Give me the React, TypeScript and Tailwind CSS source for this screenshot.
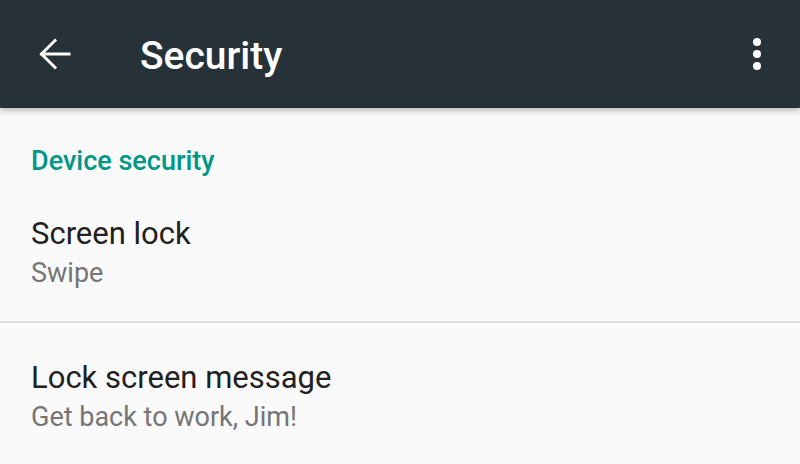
const ArrowBack = () => (
    <svg width="32" height="32" viewBox="0 0 32 32" fill="none" stroke="white" strokeWidth="3" strokeLinecap="square">
        <path d="M30 16H3" />
        <path d="M16 2.5L2.5 16L16 29.5" />
    </svg>
);

const MoreVert = () => (
    <svg width="10" height="34" viewBox="0 0 10 34" fill="white">
        <circle cx="5" cy="5" r="4" />
        <circle cx="5" cy="17" r="4" />
        <circle cx="5" cy="29" r="4" />
    </svg>
);

interface ItemProps {
    title:    string;
    summary:  string;
}

const PrefItem = ({ title, summary }: ItemProps) => (
    <div className="pl-[31px] pr-8">
        <div className="text-[31px] leading-[36px] text-[#212121]">{title}</div>
        <div className="mt-[5px] text-[27px] leading-[32px] text-[#757575]">{summary}</div>
    </div>
);

export default function App() {
    return (
        <div className="w-[800px] h-[464px] overflow-hidden bg-[#fafafa] font-['Roboto',sans-serif]">
            {/* Toolbar */}
            <div className="relative z-10 h-[108px] bg-[#263238] flex items-center
                            shadow-[0_3px_6px_rgba(0,0,0,0.25)]">
                <div className="w-[140px] flex pl-[39px]">
                    <ArrowBack />
                </div>
                <div className="flex-1 text-white text-[39px] font-medium leading-none pt-[5px]">
                    Security
                </div>
                <div className="pr-[38px] flex">
                    <MoreVert />
                </div>
            </div>

            {/* Category */}
            <div className="pt-[37px] pl-[31px] text-[27px] leading-[32px] font-medium text-[#009688]">
                Device security
            </div>

            <div className="pt-[39px] pb-[32px]">
                <PrefItem title="Screen lock" summary="Swipe" />
            </div>

            <div className="h-[2px] bg-[#dcdcdc]" />

            <div className="pt-[37px]">
                <PrefItem title="Lock screen message" summary="Get back to work, Jim!" />
            </div>
        </div>
    );
}
